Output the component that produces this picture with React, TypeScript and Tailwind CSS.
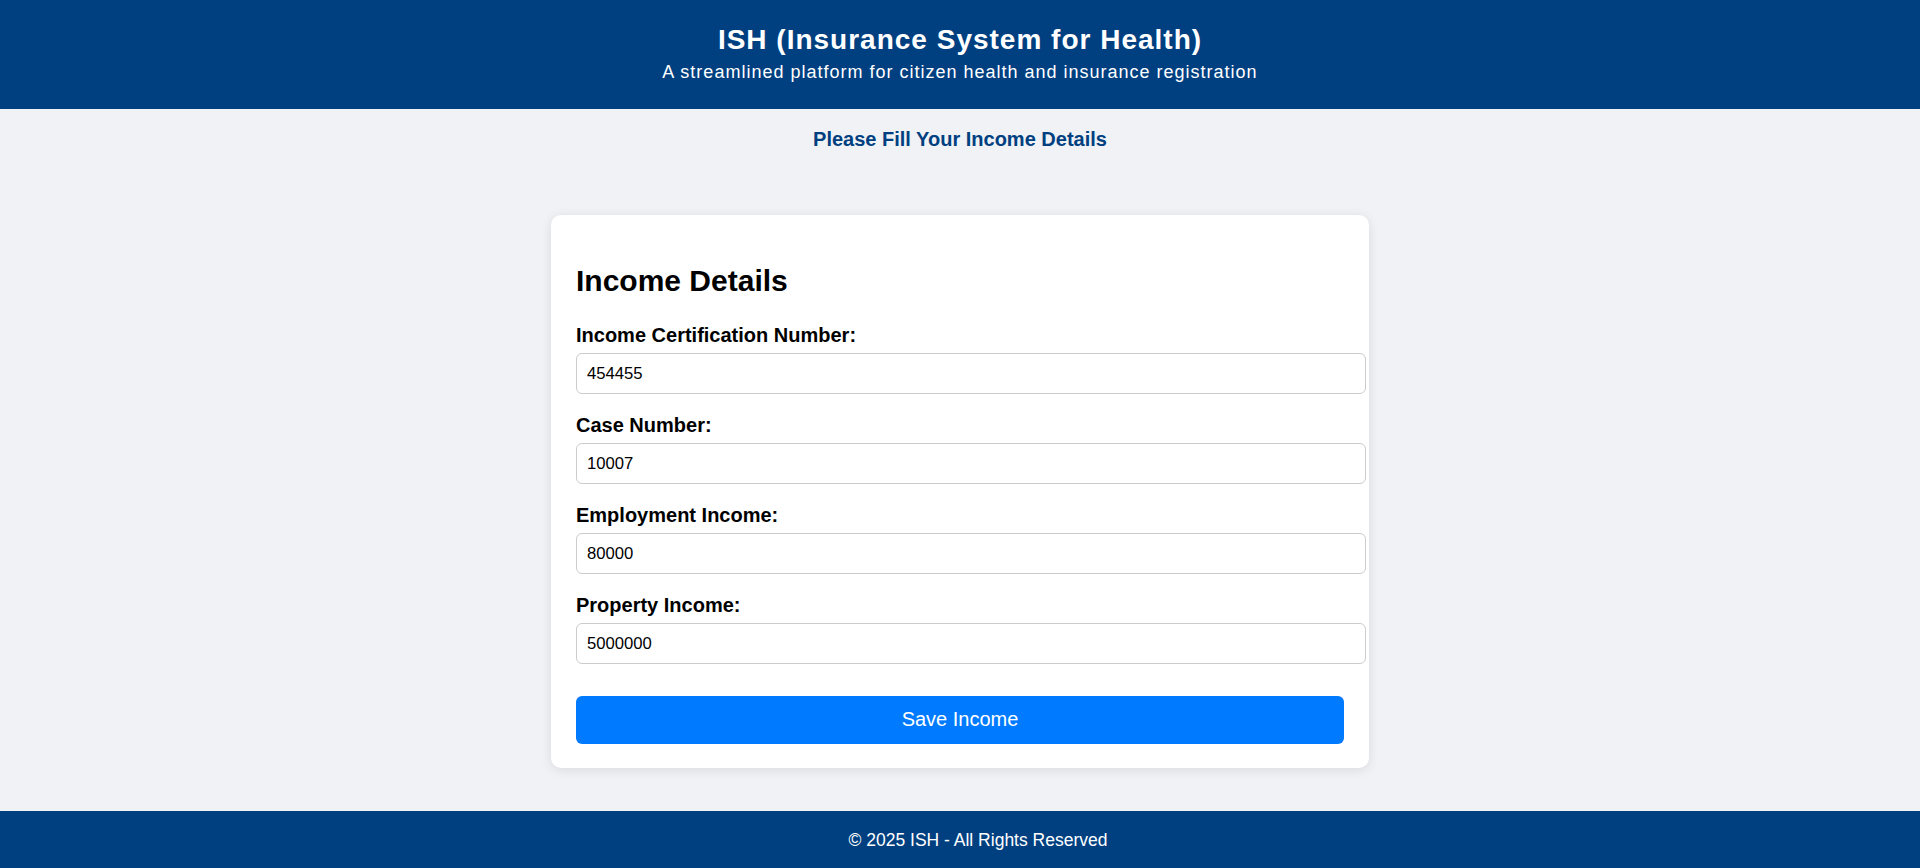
import { useState } from 'react';

const fields = [
  { id: 'incomeCertNo', label: 'Income Certification Number:', value: '454455' },
  { id: 'caseNumber', label: 'Case Number:', value: '10007' },
  { id: 'employmentIncome', label: 'Employment Income:', value: '80000' },
  { id: 'propertyIncome', label: 'Property Income:', value: '5000000' },
];

export default function App() {
  const [values, setValues] = useState<Record<string, string>>(
    Object.fromEntries(fields.map((f) => [f.id, f.value]))
  );

  const handleSubmit = (e: React.FormEvent<HTMLFormElement>) => {
    e.preventDefault();
  };

  return (
    <div className="flex min-h-screen flex-col bg-[#f0f2f5] font-['Liberation_Sans',Arial,sans-serif] text-black">
      <header className="bg-[#004080] pt-[24px] pb-[26px] text-center text-white">
        <h1 className="text-[28px] font-bold leading-[32px] tracking-[1px]">
          ISH (Insurance System for Health)
        </h1>
        <p className="mt-[6px] text-[18px] leading-[21px] tracking-[1px]">
          A streamlined platform for citizen health and insurance registration
        </p>
      </header>

      <main className="flex flex-1 flex-col items-center">
        <h3 className="mt-[18.6px] text-[20px] font-bold leading-[23px] text-[#004080]">
          Please Fill Your Income Details
        </h3>

        <form
          onSubmit={handleSubmit}
          className="mt-[64.4px] mb-[42.7px] w-[818px] rounded-[10px] bg-white px-[25px] pt-[25px] pb-[24.6px] shadow-[0_2px_12px_rgba(0,0,0,0.1)]"
        >
          <h2 className="mt-[24.5px] mb-[24.6px] text-[30px] font-bold leading-[34.5px]">
            Income Details
          </h2>

          {fields.map((f) => (
            <div key={f.id} className="mb-[19.3px]">
              <label htmlFor={f.id} className="mb-[6.7px] block text-[20px] font-bold leading-[23px]">
                {f.label}
              </label>
              <input
                type="text"
                id={f.id}
                name={f.id}
                value={values[f.id]}
                onChange={(e) => setValues({ ...values, [f.id]: e.target.value })}
                className="box-content block h-[19px] w-full rounded-[6px] border border-[#cccccc] bg-white px-[10px] py-[10px] text-[16.67px] leading-[19px] text-black outline-none"
              />
            </div>
          ))}

          {/* margins collapse with the last group's mb, so this is the full gap */}
          <button
            type="submit"
            className="mt-[31.7px] block h-[47.7px] w-full rounded-[6px] bg-[#007bff] text-[20px] leading-[23px] text-white"
          >
            Save Income
          </button>
        </form>
      </main>

      <footer className="bg-[#004080] py-[18.5px] pl-[36px] text-center text-[17.5px] leading-[20px] text-white">
        © 2025 ISH - All Rights Reserved
      </footer>
    </div>
  );
}
